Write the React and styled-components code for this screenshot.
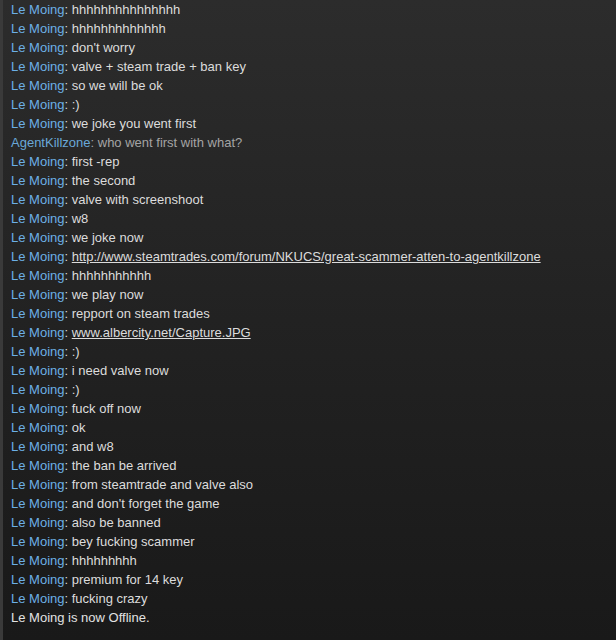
import React from "react";
import styled, { createGlobalStyle } from "styled-components";

const Global = createGlobalStyle`
  html, body { margin: 0; padding: 0; background: #1a1a1a; }
  body { font-family: "Liberation Sans", Arial, sans-serif; }
`;

const Log = styled.div`
  width: 616px;
  height: 640px;
  box-sizing: border-box;
  border-left: 3px solid #3a3a3a;
  background: linear-gradient(to bottom, #2c2c2c 0%, #222222 50%, #191919 100%);
  padding: 0 0 0 8px;
  display: flex;
  flex-direction: column;
  overflow: hidden;
`;

const Line = styled.div`
  font-size: 13px;
  line-height: 19px;
  height: 19px;
  white-space: nowrap;
  color: ${p => (p.$dim ? "#a4a4a4" : "#dcdcdc")};
`;

const Name = styled.span`
  color: ${p => (p.$other ? "#6aa8d8" : "#6cb0e6")};
`;

const Link = styled.a`
  color: #dcdcdc;
  text-decoration: underline;
`;

const Status = styled.div`
  font-size: 13px;
  line-height: 19px;
  color: #e2e2e2;
`;

const msgs = [
  ["Le Moing", "hhhhhhhhhhhhhhh"],
  ["Le Moing", "hhhhhhhhhhhhh"],
  ["Le Moing", "don't worry"],
  ["Le Moing", "valve + steam trade + ban key"],
  ["Le Moing", "so we will be ok"],
  ["Le Moing", ":)"],
  ["Le Moing", "we joke you went first"],
  ["AgentKillzone", "who went first with what?", "other"],
  ["Le Moing", "first -rep"],
  ["Le Moing", "the second"],
  ["Le Moing", "valve with screenshoot"],
  ["Le Moing", "w8"],
  ["Le Moing", "we joke now"],
  ["Le Moing", "http://www.steamtrades.com/forum/NKUCS/great-scammer-atten-to-agentkillzone", "link"],
  ["Le Moing", "hhhhhhhhhhh"],
  ["Le Moing", "we play now"],
  ["Le Moing", "repport on steam trades"],
  ["Le Moing", "www.albercity.net/Capture.JPG", "link"],
  ["Le Moing", ":)"],
  ["Le Moing", "i need valve now"],
  ["Le Moing", ":)"],
  ["Le Moing", "fuck off now"],
  ["Le Moing", "ok"],
  ["Le Moing", "and w8"],
  ["Le Moing", "the ban be arrived"],
  ["Le Moing", "from steamtrade and valve also"],
  ["Le Moing", "and don't forget the game"],
  ["Le Moing", "also be banned"],
  ["Le Moing", "bey fucking scammer"],
  ["Le Moing", "hhhhhhhhh"],
  ["Le Moing", "premium for 14 key"],
  ["Le Moing", "fucking crazy"],
];

export default function App() {
  return (
    <>
      <Global />
      <Log>
        {msgs.map(([n, t, k], i) => (
          <Line key={i} $dim={k === "other"}>
            <Name $other={k === "other"}>{n}</Name>:{" "}
            {k === "link" ? <Link href="#">{t}</Link> : t}
          </Line>
        ))}
        <Status>Le Moing is now Offline.</Status>
      </Log>
    </>
  );
}
